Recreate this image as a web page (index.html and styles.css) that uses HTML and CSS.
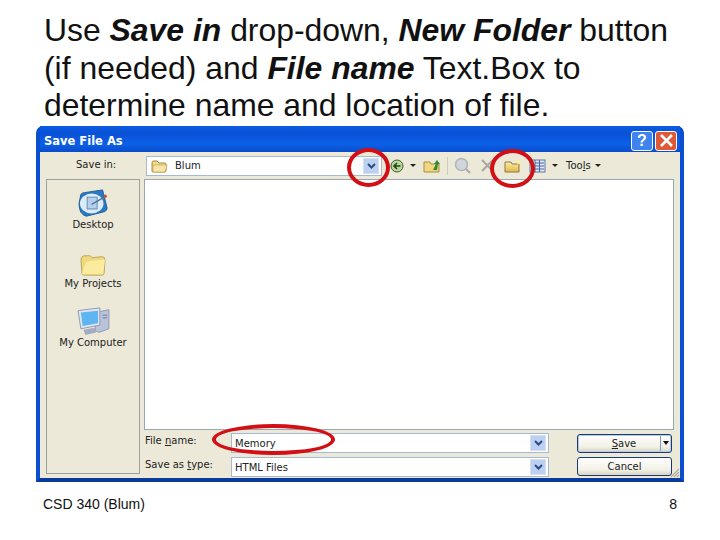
FILE: index.html
```html
<!DOCTYPE html>
<html>
<head>
    <link rel="stylesheet" href="styles.css">
</head>
<body>
    <div class="slide">
        <h1 class="slide-title">Use <em>Save in</em> drop-down, <em>New Folder</em> button (if needed) and <em>File name</em> Text.Box to determine name and location of file.</h1>

        <div class="dialog">
            <div class="titlebar">
                <span class="titlebar-text">Save File As</span>
                <span class="title-btn title-help">?</span>
                <span class="title-btn title-close">
                    <svg width="15" height="15" viewBox="0 0 15 15"><path d="M2 2 L13 13 M13 2 L2 13" stroke="#fff" stroke-width="2.6"/></svg>
                </span>
            </div>

            <div class="dialog-body">
                <div class="toolbar">
                    <span class="field-label save-in-label">Save in:</span>
                    <div class="combo save-in-combo">
                        <svg class="combo-folder" width="17" height="14" viewBox="0 0 17 14"><path d="M1 4 L1 12 Q1 13 2 13 L14 13 Q15 13 15 12 L15 5 Q15 4 14 4 L8 4 L6 2 L2 2 Q1 2 1 4Z" fill="#f3d98a" stroke="#a98c3c"/><path d="M2 6 L16 6 L14 13 L2 13Z" fill="#f8e6a8" stroke="#b69a4c" stroke-width=".6"/></svg>
                        <span class="combo-text">Blum</span>
                        <span class="combo-arrow"><svg width="9" height="6" viewBox="0 0 9 6"><path d="M1 1 L4.5 4.5 L8 1" fill="none" stroke="#2f4a80" stroke-width="2"/></svg></span>
                    </div>
                    <div class="tools">
                        <svg width="14" height="14" viewBox="0 0 14 14"><circle cx="7" cy="7" r="6" fill="#b9d89a" stroke="#3f5c30"/><path d="M10.500 7 L4 7 M7 4 L4 7 L7 10" fill="none" stroke="#26421e" stroke-width="1.600"/></svg>
                        <span class="caret tool-caret-1"></span>
                        <svg class="tool-up" width="18" height="14" viewBox="0 0 18 14"><path d="M1 3 L7 3 L8 5 L16 5 L16 13 L1 13Z" fill="#f0d67e" stroke="#a98c3c"/><path d="M10 11 L13 5 L11 5 L14 1 L17 5 L15 5 L14 11Z" fill="#2f8a35"/></svg>
                        <span class="tool-sep"></span>
                        <svg class="tool-search" width="18" height="17" viewBox="0 0 18 17"><circle cx="7.5" cy="7.5" r="6" fill="#d0d6dc" stroke="#aeb4b8" stroke-width="1.5"/><path d="M12 12 L16 16" stroke="#a4aaae" stroke-width="2"/></svg>
                        <svg class="tool-delete" width="13" height="13" viewBox="0 0 13 13"><path d="M1 1 L12 12 M12 1 L1 12" stroke="#a9a9a3" stroke-width="2.2"/></svg>
                        <svg class="tool-new" width="18" height="14" viewBox="0 0 18 14"><defs><linearGradient id="newFolderFill" x1="0" y1="0" x2="0" y2="1"><stop offset="0" stop-color="#fbeda8"/><stop offset="1" stop-color="#e2b848"/></linearGradient></defs><path d="M1 3 L7 3 L8 5 L15 5 L15 13 L1 13Z" fill="url(#newFolderFill)" stroke="#8f7a3c"/><path d="M14 0 L15 2 L17 3 L15 4 L14 6 L13 4 L11 3 L13 2Z" fill="#fff08a"/></svg>
                        <svg class="tool-views" width="17" height="14" viewBox="0 0 17 14"><rect x="1" y="1" width="15" height="12" fill="#dfe8f6" stroke="#5c78a8"/><path d="M6 4 H15 M6 7 H15 M6 10 H15 M6 1 V13 M10.500 1 V13" stroke="#4a68a0"/></svg>
                        <span class="caret tool-caret-2"></span>
                        <span class="tools-text">Too<u>l</u>s</span>
                        <span class="caret"></span>
                    </div>
                </div>

                <div class="main">
                    <div class="places">
                        <div class="place">
                            <svg width="33" height="29" viewBox="0 0 36 32"><path d="M4 6 Q5 4 8 4 L28 1 L33 21 Q33 24 30 25 L10 30 Q2 28 2 16Z" fill="#2a78c4" stroke="#1d578f"/><ellipse cx="16" cy="16" rx="13" ry="11" fill="#dcebf8"/><rect x="11" y="9" width="11" height="13" fill="#b4d0ec" stroke="#5d86b0"/><path d="M16 17 L30 9" stroke="#47719f" stroke-width="1.500"/><circle cx="31" cy="8" r="1.800" fill="#c4553a"/></svg>
                            <span class="place-label">Desktop</span>
                        </div>
                        <div class="place">
                            <svg width="28" height="24" viewBox="0 0 30 26"><path d="M2 8 Q2 3 6 3 L12 3 L14 5 L25 4 Q28 4 28 8 L27 22 Q27 24 25 24 L5 24 Q3 24 3 22Z" fill="#efd77e" stroke="#b8a357"/><path d="M3 23 Q6 10 9 9 L28 7 L26 23Z" fill="#fbeb9f"/></svg>
                            <span class="place-label">My Projects</span>
                        </div>
                        <div class="place">
                            <svg width="35" height="29" viewBox="0 0 36 32"><path d="M20 6 L35 3 L35 24 L24 28 L20 26Z" fill="#b9c3da" stroke="#8a94ad"/><path d="M1 4 L25 1 L25 20 L4 24Z" fill="#dfe6f2" stroke="#8a94ad"/><path d="M4 6 L23 4 L23 18 L6 21Z" fill="#5fb4f2"/><path d="M7 25 L19 23 L21 28 L9 31Z" fill="#a3adc2"/><path d="M28 9 H33 M28 12 H33" stroke="#6c7690"/></svg>
                            <span class="place-label">My Computer</span>
                        </div>
                    </div>

                    <div class="content">
                        <div class="file-list"></div>
                        <div class="form-row">
                            <span class="field-label form-label">File <u>n</u>ame:</span>
                            <div class="combo form-combo">
                                <span class="combo-text">Memory</span>
                                <span class="combo-arrow"><svg width="9" height="6" viewBox="0 0 9 6"><path d="M1 1 L4.5 4.5 L8 1" fill="none" stroke="#2f4a80" stroke-width="2"/></svg></span>
                            </div>
                            <div class="btn btn-save"><span class="btn-main"><u>S</u>ave</span><span class="btn-drop"></span></div>
                        </div>
                        <div class="form-row">
                            <span class="field-label form-label">Save as <u>t</u>ype:</span>
                            <div class="combo form-combo">
                                <span class="combo-text">HTML Files</span>
                                <span class="combo-arrow"><svg width="9" height="6" viewBox="0 0 9 6"><path d="M1 1 L4.5 4.5 L8 1" fill="none" stroke="#2f4a80" stroke-width="2"/></svg></span>
                            </div>
                            <div class="btn btn-cancel">Cancel</div>
                        </div>
                    </div>
                </div>
            </div>

            <svg class="grip" width="11" height="10" viewBox="0 0 11 10"><path d="M10 1 L2 9 M10 4 L5 9 M10 7 L8 9" stroke="#b0ac98" stroke-width="1.200"/></svg>

            <!-- red marks drawn over the screenshot -->
            <span class="mark mark-savein"></span>
            <span class="mark mark-newfolder"></span>
            <span class="mark mark-filename"></span>
        </div>

        <div class="slide-footer">
            <span>CSD 340 (Blum)</span>
            <span>8</span>
        </div>
    </div>
</body>
</html>
```

FILE: styles.css
```css
html, body {
    margin: 0;
    padding: 0;
    background: #fff;
}
.slide {
    width: 720px;
    height: 540px;
    overflow: hidden;
    font-family: "Liberation Sans", Arial, sans-serif;
    color: #111;
}
.slide-title {
    margin: 0;
    padding: 12px 30px 0 44px;
    height: 114px;
    font-size: 31.9px;
    font-weight: normal;
    line-height: 37.5px;
}
.slide-title em {
    font-weight: bold;
    font-style: italic;
}
.dialog {
    position: relative;
    width: 648px;
    height: 356px;
    margin-left: 36px;
    box-sizing: border-box;
    background: #0a50d8;
    border-radius: 7px 7px 0 0;
    border: 4px solid #0a4fd0;
    border-top: none;
    border-bottom-color: #0a3a9c;
    display: flex;
    flex-direction: column;
    font-family: "DejaVu Sans", Verdana, sans-serif;
    font-size: 10px;
    color: #222;
}
.titlebar {
    height: 26px;
    box-sizing: border-box;
    padding: 3px 3px 0 0;
    flex: none;
    display: flex;
    align-items: center;
    gap: 2px;
    background: linear-gradient(#0a5be0, #0a52d8 30%, #0b60e8 70%, #0a4cc8);
}
.titlebar-text {
    flex: 1;
    padding-left: 4px;
    color: #fff;
    font-weight: bold;
    font-size: 11.5px;
}
.title-btn {
    width: 22px;
    height: 20px;
    box-sizing: border-box;
    border: 1px solid #fff;
    border-radius: 3px;
    display: flex;
    align-items: center;
    justify-content: center;
    color: #fff;
    font-family: "Liberation Sans", Arial, sans-serif;
    font-weight: bold;
    font-size: 16px;
}
.title-help {
    background: #3f84ee;
}
.title-close {
    background: #de5a36;
}
.dialog-body {
    flex: 1;
    background: #ece9d8;
    display: flex;
    flex-direction: column;
    min-height: 0;
}
.toolbar {
    height: 27px;
    flex: none;
    display: flex;
    align-items: center;
}
.field-label {
    white-space: nowrap;
}
.field-label u,
.tools-text u,
.btn u {
    text-underline-offset: 1px;
}
.save-in-label {
    width: 106px;
    box-sizing: border-box;
    padding: 0 0 3px 36px;
}
.combo {
    box-sizing: border-box;
    height: 20px;
    background: #fff;
    border: 1px solid #a5b9d0;
    display: flex;
    align-items: center;
    padding: 0 2px 0 3px;
}
.combo-text {
    flex: 1;
    white-space: nowrap;
}
.combo-arrow {
    width: 16px;
    height: 16px;
    background: #bcd0f2;
    border: 1px solid #d5e0f5;
    box-sizing: border-box;
    display: flex;
    align-items: center;
    justify-content: center;
}
.save-in-combo {
    width: 236px;
}
.combo-folder {
    margin-right: 7px;
    margin-left: 1px;
}
.tools {
    display: flex;
    align-items: center;
    padding-left: 8px;
}
.caret {
    display: inline-block;
    width: 0;
    height: 0;
    border-left: 3px solid transparent;
    border-right: 3px solid transparent;
    border-top: 3px solid #222;
}
.tool-caret-1 {
    margin: 0 7px 0 6px;
}
.tool-sep {
    width: 1px;
    height: 18px;
    background: #cfccba;
    margin: 0 6px;
}
.tool-search {
    margin-right: 9px;
}
.tool-delete {
    margin-right: 10px;
}
.tool-new {
    margin-right: 7px;
}
.tool-caret-2 {
    margin: 0 8px 0 6px;
}
.tools-text {
    margin-right: 4px;
}
.main {
    flex: 1;
    display: flex;
    min-height: 0;
    padding: 0 6px;
}
.places {
    width: 94px;
    flex: none;
    box-sizing: border-box;
    margin-bottom: 4px;
    border: 1px solid #9aa0a0;
    display: flex;
    flex-direction: column;
    align-items: center;
    gap: 9px;
}
.place {
    height: 50px;
    display: flex;
    flex-direction: column;
    align-items: center;
    justify-content: flex-end;
}
.place-label {
    margin-top: 1px;
    white-space: nowrap;
}
.content {
    flex: 1;
    min-width: 0;
    padding-left: 4px;
    display: flex;
    flex-direction: column;
}
.file-list {
    flex: 1;
    background: #fff;
    border: 1px solid #9aa6b4;
}
.form-row {
    height: 24px;
    box-sizing: border-box;
    padding-top: 3px;
    flex: none;
    display: flex;
    align-items: flex-start;
}
.form-label {
    width: 87px;
    margin-top: -2px;
    padding-left: 1px;
    line-height: 20px;
    box-sizing: border-box;
}
.form-combo {
    width: 318px;
}
.btn {
    margin-left: 28px;
    width: 95px;
    height: 19px;
    box-sizing: border-box;
    border: 1px solid #1c3a70;
    border-radius: 3px;
    background: linear-gradient(#fff, #f2f0e6 70%, #d8d4c2);
    display: flex;
    align-items: center;
    justify-content: center;
}
.btn-main {
    flex: 1;
    padding-left: 10px;
    text-align: center;
}
.btn-save {
    margin-top: 1px;
    box-shadow: inset 0 0 0 1px #b5cbea;
}
.btn-drop {
    width: 10px;
    height: 15px;
    border-left: 1px solid #7f9db9;
    position: relative;
}
.btn-drop::after {
    content: "";
    position: absolute;
    left: 2px;
    top: 5px;
    border-left: 3px solid transparent;
    border-right: 3px solid transparent;
    border-top: 4px solid #111;
}
.grip {
    position: absolute;
    right: 0;
    bottom: 0;
}
.mark {
    position: absolute;
    box-sizing: border-box;
    border: 4px solid #d10f14;
    border-radius: 50%;
}
.mark-savein {
    left: 307px;
    top: 22px;
    width: 43px;
    height: 39px;
}
.mark-newfolder {
    left: 450px;
    top: 23px;
    width: 45px;
    height: 39px;
}
.mark-filename {
    left: 172px;
    top: 298px;
    width: 123px;
    height: 31px;
}
.slide-footer {
    display: flex;
    justify-content: space-between;
    padding: 14px 43px 0 43px;
    font-size: 14px;
    line-height: 16px;
}
```
